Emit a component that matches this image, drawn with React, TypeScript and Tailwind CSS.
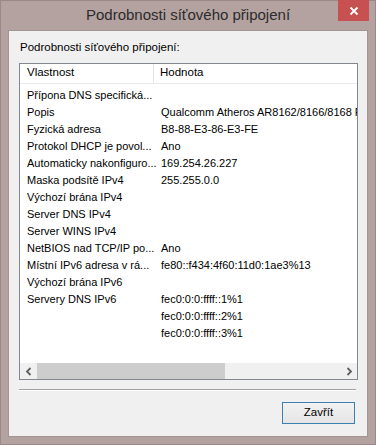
const rows: [string, string][] = [
  ["Přípona DNS specifická...", ""],
  ["Popis", "Qualcomm Atheros AR8162/8166/8168 PCI-E Fast Ethernet Controller (NDIS 6.30)"],
  ["Fyzická adresa", "B8-88-E3-86-E3-FE"],
  ["Protokol DHCP je povol...", "Ano"],
  ["Automaticky nakonfiguro...", "169.254.26.227"],
  ["Maska podsítě IPv4", "255.255.0.0"],
  ["Výchozí brána IPv4", ""],
  ["Server DNS IPv4", ""],
  ["Server WINS IPv4", ""],
  ["NetBIOS nad TCP/IP po...", "Ano"],
  ["Místní IPv6 adresa v rá...", "fe80::f434:4f60:11d0:1ae3%13"],
  ["Výchozí brána IPv6", ""],
  ["Servery DNS IPv6", "fec0:0:0:ffff::1%1"],
  ["", "fec0:0:0:ffff::2%1"],
  ["", "fec0:0:0:ffff::3%1"],
];

function Chevron({ dir }: { dir: "left" | "right" }) {
  return (
    <svg width="8" height="9" viewBox="0 0 8 9">
      <path
        d={dir === "left" ? "M5.5 1 L2 4.5 L5.5 8" : "M2.5 1 L6 4.5 L2.5 8"}
        fill="none"
        stroke="#606060"
        strokeWidth="1.8"
      />
    </svg>
  );
}

export default function App() {
  return (
    <div className="flex h-[445px] w-[376px] flex-col border border-[#9a8988] bg-[#b4a2a1] font-['Liberation_Sans',sans-serif] text-black">
      <div className="relative flex h-[29px] shrink-0 items-center justify-center">
        <span className="text-[15px] text-[#2b2b2b]">Podrobnosti síťového připojení</span>
        <div className="absolute right-[6px] top-[-1px] flex h-[21px] w-[31px] items-center justify-center bg-[#c75050]">
          <svg width="10" height="10" viewBox="0 0 10 10">
            <path d="M1.5 1.5 L8.5 8.5 M8.5 1.5 L1.5 8.5" stroke="#fff" strokeWidth="1.8" />
          </svg>
        </div>
      </div>

      <div className="mx-[7px] mb-[7px] flex flex-1 flex-col border border-[#a49493] bg-[#f0f0f0] px-[10px] text-[11px]">
        <div className="flex h-[32px] shrink-0 items-center pl-[1px] pt-[2px] text-[11.5px]">
          Podrobnosti síťového připojení:
        </div>

        <div className="flex h-[317px] w-[339px] shrink-0 flex-col border border-[#828790] bg-white">
          <div className="flex h-[20px] shrink-0 border-b border-[#eaeaea] text-[11.5px]">
            <div className="flex w-[134px] items-center border-r border-[#e5e5e5] pb-[2px] pl-[7px]">
              Vlastnost
            </div>
            <div className="flex flex-1 items-center pb-[2px] pl-[6px]">Hodnota</div>
          </div>

          <div className="flex flex-1 flex-col overflow-hidden pt-[3px]">
            {rows.map(([label, value], i) => (
              <div key={i} className="flex h-[17px] shrink-0 items-center whitespace-nowrap">
                <div className="w-[134px] shrink-0 pl-[7px]">{label}</div>
                <div className="min-w-0 flex-1 overflow-hidden pl-[7px]">{value}</div>
              </div>
            ))}
          </div>

          <div className="flex h-[16px] shrink-0 items-center bg-[#f0f0f0]">
            <div className="flex w-[17px] items-center justify-center">
              <Chevron dir="left" />
            </div>
            <div className="flex flex-1 items-stretch self-stretch">
              <div className="w-[188px] bg-[#cdcdcd]" />
            </div>
            <div className="flex w-[17px] items-center justify-center">
              <Chevron dir="right" />
            </div>
          </div>
        </div>

        <div className="mt-[9px] h-[2px] w-[337px] shrink-0 border-t border-[#a0a0a0] border-b-white border-b" />

        <div className="flex flex-1 items-start justify-end pr-[2px] pt-[11px]">
          <button className="flex h-[22px] w-[73px] items-center justify-center border border-[#3c7fb1] bg-[linear-gradient(#f2f2f2,#e5e5e5)] text-[11.5px]">
            Zavřít
          </button>
        </div>
      </div>
    </div>
  );
}
